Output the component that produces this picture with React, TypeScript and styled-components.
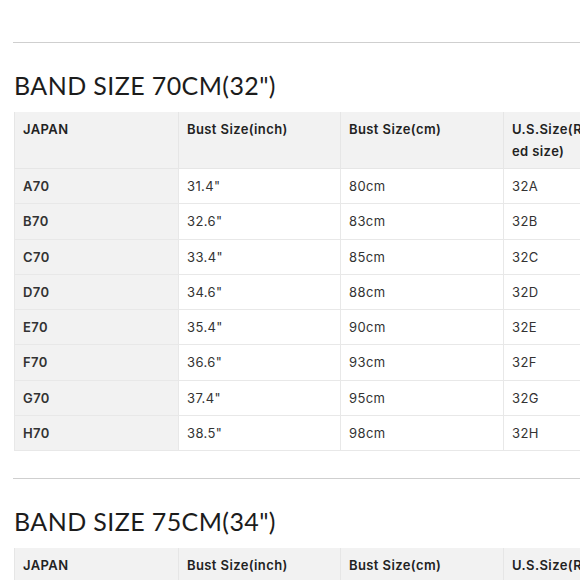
import styled, { createGlobalStyle } from "styled-components";

const GlobalStyle = createGlobalStyle`
  html, body {
    margin: 0;
    padding: 0;
    background: #ffffff;
  }
  body {
    font-family: Inter, "Open Sans", "Liberation Sans", sans-serif;
    color: #222;
  }
`;

const bandSizes = [
  {
    title: `BAND SIZE 70CM(32")`,
    band: "70",
    us: "32",
    rows: [
      ["31.4\"", "80cm"],
      ["32.6\"", "83cm"],
      ["33.4\"", "85cm"],
      ["34.6\"", "88cm"],
      ["35.4\"", "90cm"],
      ["36.6\"", "93cm"],
      ["37.4\"", "95cm"],
      ["38.5\"", "98cm"],
    ],
  },
  {
    title: `BAND SIZE 75CM(34")`,
    band: "75",
    us: "34",
    rows: [
      ["33.4\"", "85cm"],
      ["34.6\"", "88cm"],
    ],
  },
];

const cups = ["A", "B", "C", "D", "E", "F", "G", "H"];

const Page = styled.div`
  width: 580px;
  height: 580px;
  overflow: hidden;
  padding: 42px 0 0 14px;
  box-sizing: border-box;
`;

const Section = styled.section`
  display: flex;
  flex-direction: column;
  margin-bottom: 27px;
`;

const Divider = styled.hr`
  margin: 0 0 0 -1px;
  border: 0;
  border-top: 1.5px solid #cfcfcf;
  width: 600px;
`;

const Heading = styled.h2`
  margin: 27px 0 12px;
  font-family: Lato, "Open Sans", sans-serif;
  font-size: 25px;
  line-height: 30px;
  font-weight: 400;
  letter-spacing: 0.4px;
  color: #1c1c1c;
`;

const Table = styled.table`
  border-collapse: collapse;
  table-layout: fixed;
  width: 604px;
  font-size: 13px;
  line-height: 22px;
`;

const HeadCell = styled.th<{ $w: number }>`
  width: ${({ $w }) => $w}px;
  box-sizing: border-box;
  text-align: left;
  vertical-align: top;
  padding: 6px 8px;
  font-weight: 600;
  letter-spacing: 0.4px;
  color: #222;
  background: #f2f2f2;
  border: 1px solid #e6e6e6;
  border-top: 0;
  word-break: break-all;
`;

const Cell = styled.td<{ $label?: boolean }>`
  padding: 6px 8px 6.25px;
  color: #333;
  letter-spacing: 0.4px;
  font-weight: ${({ $label }) => ($label ? 600 : 400)};
  background: ${({ $label }) => ($label ? "#f2f2f2" : "#ffffff")};
  border: 1px solid #e8e8e8;
`;

const columns = [
  { label: "JAPAN", width: 164 },
  { label: "Bust Size(inch)", width: 162 },
  { label: "Bust Size(cm)", width: 163 },
  { label: "U.S.Size(Related size)", width: 115 },
];

export default function App() {
  return (
    <>
      <GlobalStyle />
      <Page>
        {bandSizes.map((section) => (
          <Section key={section.band}>
            <Divider />
            <Heading>{section.title}</Heading>
            <Table>
              <thead>
                <tr>
                  {columns.map((col) => (
                    <HeadCell key={col.label} $w={col.width}>
                      {col.label}
                    </HeadCell>
                  ))}
                </tr>
              </thead>
              <tbody>
                {section.rows.map((row, i) => (
                  <tr key={i}>
                    <Cell $label>{cups[i] + section.band}</Cell>
                    <Cell>{row[0]}</Cell>
                    <Cell>{row[1]}</Cell>
                    <Cell>{section.us + cups[i]}</Cell>
                  </tr>
                ))}
              </tbody>
            </Table>
          </Section>
        ))}
      </Page>
    </>
  );
}
